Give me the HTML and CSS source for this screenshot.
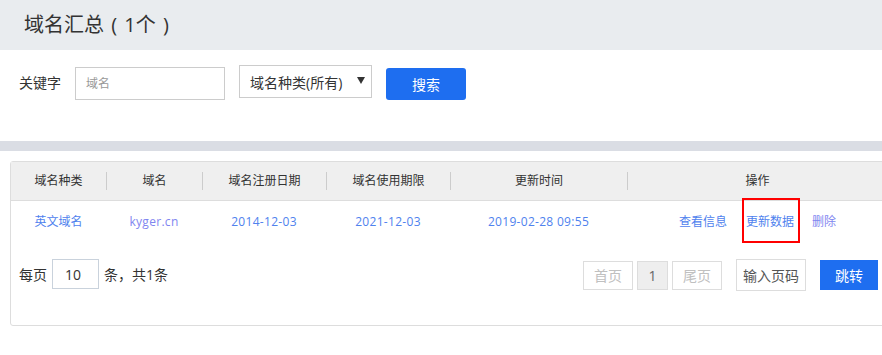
FILE: index.html
```html
<!DOCTYPE html>
<html lang="zh-CN">

<head>
  <meta charset="UTF-8">
  <meta name="viewport" content="width=device-width, initial-scale=1.0">
  <title>域名汇总</title>
  <link rel="stylesheet" href="styles.css">
</head>

<body>
  <h2 class="page-title">域名汇总 ( 1个 )</h2>

  <div class="search">
    <label for="keyword">关键字</label>
    <input id="keyword" type="text" placeholder="域名">
    <div class="select">
      <span>域名种类(所有)</span>
      <svg width="8" height="7" viewBox="0 0 8 7"><path d="M0 0h8L4 7z" fill="#333"/></svg>
    </div>
    <button class="btn-blue btn-search">搜索</button>
  </div>

  <div class="strip"></div>

  <div class="card">
    <div class="row head">
      <div>域名种类</div>
      <div>域名</div>
      <div>域名注册日期</div>
      <div>域名使用期限</div>
      <div>更新时间</div>
      <div>操作</div>
    </div>
    <div class="row body">
      <div><a href="#">英文域名</a></div>
      <div class="num"><a href="#" class="visited">kyger.cn</a></div>
      <div class="num"><a href="#">2014-12-03</a></div>
      <div class="num"><a href="#">2021-12-03</a></div>
      <div class="num"><a href="#">2019-02-28 09:55</a></div>
      <div class="ops">
        <a href="#">查看信息</a>
        <a href="#" class="marked">更新数据</a>
        <a href="#" class="visited">删除</a>
      </div>
    </div>
    <div class="pager">
      <div class="per-page">
        每页 <input type="text" value="10"> 条，共1条
      </div>
      <div class="pages">
        <span class="page disabled">首页</span>
        <span class="page current">1</span>
        <span class="page disabled">尾页</span>
        <input class="goto" type="text" placeholder="输入页码">
        <button class="btn-blue btn-jump">跳转</button>
      </div>
    </div>
  </div>
</body>

</html>
```

FILE: styles.css
```css
/* Basic */
body {
  margin: 0;
  background: #fff;
  color: #333;
  font-family: "Open Sans", "Noto Sans CJK SC", "Microsoft YaHei", sans-serif;
  overflow-x: hidden;
}
a {
  color: #4f82ee;
  text-decoration: none;
}
a.visited {
  color: #7f86f0;
}
input, button {
  outline: none;
  font-family: inherit;
}
.btn-blue {
  background: #1e6ef0;
  color: #fff;
  border: 0;
  font-size: 14px;
  cursor: pointer;
}

/* Title */
.page-title {
  margin: 0;
  height: 50px;
  padding: 1px 0 0 24px;
  box-sizing: border-box;
  background: #e9ecef;
  font-size: 20px;
  font-weight: 400;
  line-height: 48px;
  word-spacing: 2px;
}

/* Search bar */
.search {
  height: 91px;
  box-sizing: border-box;
  padding: 15px 0 0 19px;
  display: flex;
  font-size: 14px;
}
.search label {
  line-height: 36px;
  margin: 0 14px 0 0;
}
.search input {
  width: 150px;
  height: 33px;
  box-sizing: border-box;
  margin: 2px 14px 0 0;
  padding: 0 10px;
  border: 1px solid #ccc;
  font-size: 12px;
}
.search input::placeholder {
  color: #999;
}
.select {
  width: 133px;
  height: 33px;
  box-sizing: border-box;
  margin: 0 14px 0 0;
  padding: 0 6px 0 10px;
  border: 1px solid #ccc;
  display: flex;
  align-items: center;
  justify-content: space-between;
}
.select svg {
  margin: -2px 0 0;
}
.btn-search {
  width: 80px;
  height: 32px;
  margin: 3px 0 0;
  border-radius: 3px;
}

.strip {
  height: 10px;
  background: #dadde4;
}

/* Table card */
.card {
  width: 878px;
  margin: 10px 0 0 10px;
  border: 1px solid #ddd;
  border-radius: 3px;
  font-size: 12px;
}
.row {
  display: grid;
  grid-template-columns: 95px 96px 124px 124px 177px 260px;
  text-align: center;
}
.head {
  padding: 10px 0;
  background: #efefef;
  border-bottom: 1px solid #ddd;
  line-height: 18px;
}
.head > div + div {
  border-left: 1px solid #ccc;
}
.body {
  height: 42px;
}
.body > div {
  display: flex;
  align-items: center;
  justify-content: center;
  line-height: 18px;
}
.body .num {
  letter-spacing: 0.3px;
}
.ops {
  padding: 0 0 0 1px;
}
.ops a {
  margin: 0 17px 0 0;
}
.ops a:last-child {
  margin: 0;
}
.ops a.marked {
  align-self: flex-start;
  margin: -1px 14px 0 0;
  padding: 13px 4px 10px 2px;
  outline: 2px solid #f00;
}

/* Pager */
.pager {
  height: 82px;
  box-sizing: border-box;
  padding: 16px 11px 0 8px;
  display: flex;
  justify-content: space-between;
  align-items: flex-start;
  font-size: 14px;
}
.per-page {
  height: 30px;
  display: flex;
  align-items: center;
  gap: 5px;
}
.per-page input {
  width: 47px;
  height: 30px;
  box-sizing: border-box;
  padding: 0 0 0 12px;
  border: 1px solid #c9d2dc;
  font-size: 14px;
  color: #333;
}
.pages {
  display: flex;
  align-items: center;
  height: 32px;
}
.page {
  height: 29px;
  box-sizing: border-box;
  border: 1px solid #ddd;
  line-height: 27px;
  text-align: center;
  margin: 0 4px 0 0;
}
.page.disabled {
  width: 50px;
  color: #c0c0c0;
}
.page.current {
  width: 31px;
  background: #eee;
  color: #666;
}
.pages .page:nth-child(3) {
  margin: 0 14px 0 0;
}
.goto {
  width: 70px;
  height: 32px;
  box-sizing: border-box;
  padding: 0 0 0 6px;
  border: 1px solid #ddd;
  font-size: 14px;
  margin: 0 14px 0 0;
}
.goto::placeholder {
  color: #555;
}
.btn-jump {
  width: 58px;
  height: 30px;
}
```
